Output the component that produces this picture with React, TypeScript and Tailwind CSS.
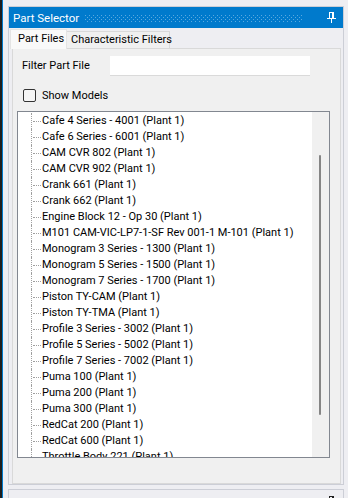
import React from "react";

const items = [
  "Cafe 4 Series - 4001 (Plant 1)",
  "Cafe 6 Series - 6001 (Plant 1)",
  "CAM CVR 802 (Plant 1)",
  "CAM CVR 902 (Plant 1)",
  "Crank 661 (Plant 1)",
  "Crank 662 (Plant 1)",
  "Engine Block 12 - Op 30 (Plant 1)",
  "M101 CAM-VIC-LP7-1-SF Rev 001-1 M-101 (Plant 1)",
  "Monogram 3 Series - 1300 (Plant 1)",
  "Monogram 5 Series - 1500 (Plant 1)",
  "Monogram 7 Series - 1700 (Plant 1)",
  "Piston TY-CAM (Plant 1)",
  "Piston TY-TMA (Plant 1)",
  "Profile 3 Series - 3002 (Plant 1)",
  "Profile 5 Series - 5002 (Plant 1)",
  "Profile 7 Series - 7002 (Plant 1)",
  "Puma 100 (Plant 1)",
  "Puma 200 (Plant 1)",
  "Puma 300 (Plant 1)",
  "RedCat 200 (Plant 1)",
  "RedCat 600 (Plant 1)",
  "Throttle Body 221 (Plant 1)",
];

function Pin({ color }: { color: string }) {
  return (
    <svg className="shrink-0" width="9" height="11" viewBox="0 0 9 11" shapeRendering="crispEdges">
      <rect x="2" y="0" width="4" height="1" fill={color} />
      <rect x="2" y="0" width="1" height="6" fill={color} />
      <rect x="5" y="0" width="2" height="6" fill={color} />
      <rect x="0" y="6" width="9" height="1" fill={color} />
      <rect x="4" y="7" width="1" height="4" fill={color} />
    </svg>
  );
}

function Grip() {
  return (
    <svg className="w-full" height="7" shapeRendering="crispEdges">
      <defs>
        <pattern id="grip" width="4" height="4" patternUnits="userSpaceOnUse">
          <rect x="0" y="0" width="1" height="1" fill="#5aa9e0" />
          <rect x="2" y="2" width="1" height="1" fill="#5aa9e0" />
        </pattern>
      </defs>
      <rect x="0" y="0" width="100%" height="7" fill="url(#grip)" />
    </svg>
  );
}

export default function App() {
  return (
    <div className="w-[348px] h-[498px] bg-[#eeeef2] flex overflow-hidden font-['Roboto',sans-serif] text-[11px] leading-[16px] text-black">
      <div className="w-[2px] bg-[#1e1e1e]" />
      <div className="w-[1px] bg-[#007acc]" />
      <div className="flex-1 flex flex-col pl-[5px] pr-[4px] pt-[6px]">
        {/* main frame */}
        <div className="shrink-0 h-[479px] border border-[#ccced6] flex flex-col">
          {/* title bar */}
          <div className="h-[21px] bg-[#007acc] flex items-center pl-[4px] pr-[7px] text-white">
            <span className="shrink-0 whitespace-nowrap text-[11.5px]">Part Selector</span>
            <div className="flex-1 min-w-0 flex ml-[6px] mr-[25px] pt-[1px]">
              <Grip />
            </div>
            <Pin color="#ffffff" />
          </div>
          {/* tabs header */}
          <div className="mt-[1px] h-[19px] flex items-start pl-[1px] whitespace-nowrap">
            <div className="relative z-10 shrink-0 w-[57px] h-[20px] bg-[#f9f9f9] border-l border-t border-r border-[#e4e4e4] flex items-center pl-[7px] pb-[1px]">
              Part Files
            </div>
            <div className="shrink-0 mt-[2px] w-[103px] h-[17px] bg-[#f0f0f0] border-t border-r border-[#d9d9d9] flex items-center pl-[4px]">
              Characteristic Filters
            </div>
          </div>
          {/* tab page */}
          <div className="flex-1 ml-[3px] mr-[2px] border border-[#d9d9d9] bg-[#f0f0f0] flex flex-col">
            <div className="mt-[7px] h-[20px] flex items-center pl-[9px]">
              <div className="w-[88px]">Filter Part File</div>
              <div className="w-[200px] h-[20px] bg-white border-b border-[#dadada]" />
            </div>
            <div className="mt-[13px] h-[13px] flex items-center pl-[10px]">
              <div className="w-[13px] h-[13px] rounded-[2px] border border-[#333333] bg-[#f5f5f5]" />
              <div className="ml-[6px]">Show Models</div>
            </div>
            <div className="mt-[9px] ml-[4px] w-[313px] h-[347px] border border-[#828790] bg-white flex overflow-hidden">
              <div className="flex-1 pt-[1px] overflow-hidden">
                {items.map((t) => (
                  <div key={t} className="h-[16px] flex items-stretch whitespace-nowrap">
                    <div className="w-[13px] shrink-0" />
                    <div className="w-[11px] shrink-0 border-l border-dotted border-[#a0a0a0] flex items-center">
                      <div className="ml-[1px] w-[8px] border-t border-dotted border-[#a0a0a0]" />
                    </div>
                    <div className="flex items-center">{t}</div>
                  </div>
                ))}
              </div>
              <div className="w-[17px] shrink-0 bg-[#f0f0f0] flex flex-col pt-[43px] pl-[7px]">
                <div className="w-[2px] h-[260px] bg-[#858585] rounded-full" />
              </div>
            </div>
          </div>
        </div>
        {/* next panel */}
        <div className="mt-[4px] flex-1 min-h-0 overflow-hidden border-t border-l border-r border-[#ccced6] flex justify-end items-start pt-[6px] pr-[7px]">
          <Pin color="#1e1e1e" />
        </div>
      </div>
    </div>
  );
}
